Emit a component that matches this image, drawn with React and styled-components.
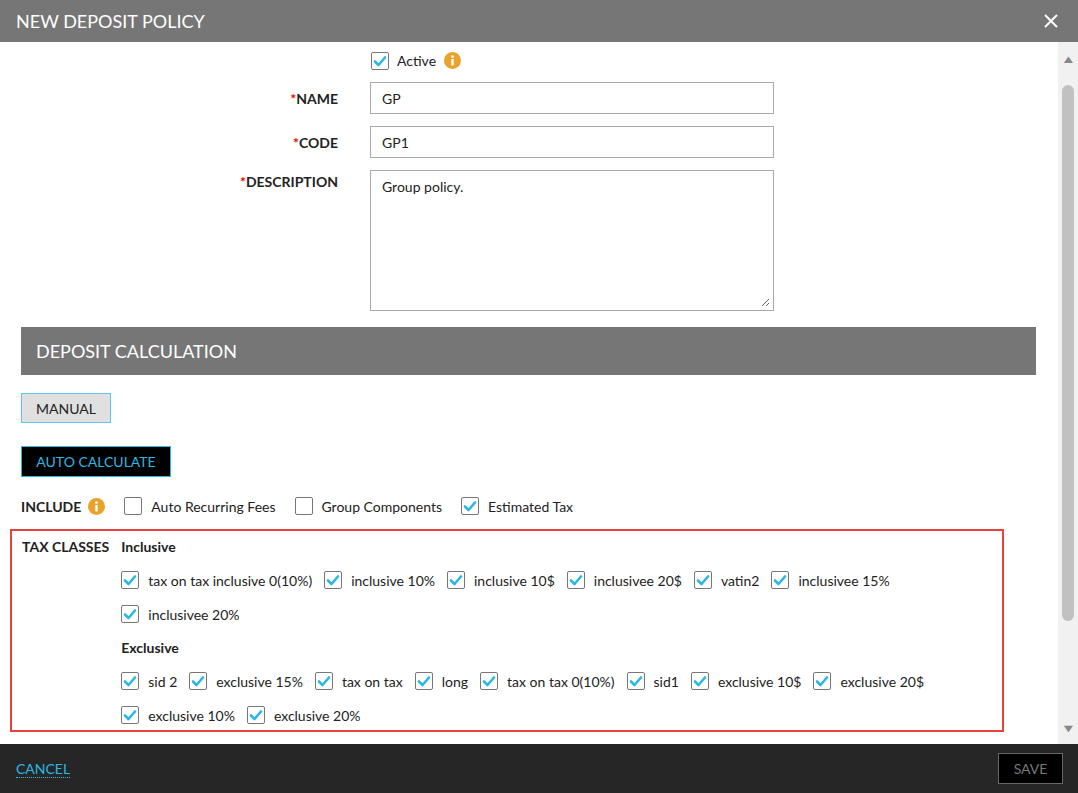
import React from 'react';
import styled, { createGlobalStyle } from 'styled-components';

const Global = createGlobalStyle`
  html, body { margin: 0; padding: 0; }
  body { font-family: Lato, "Open Sans", sans-serif; color: #222; background: #fff; }
  * { box-sizing: border-box; }
`;

const Check = ({ on }) => (
  <Box>
    {on && (
      <svg width="14" height="12" viewBox="0 0 14 12">
        <path d="M2 6.5 L5.5 10 L12 2.5" fill="none" stroke="#2bb7e4" strokeWidth="2.6" strokeLinecap="round" strokeLinejoin="round" />
      </svg>
    )}
  </Box>
);

const Info = () => (
  <svg width="17" height="17" viewBox="0 0 17 17">
    <circle cx="8.5" cy="8.5" r="8.5" fill="#eaa22b" />
    <circle cx="8.5" cy="4.6" r="1.4" fill="#fff" />
    <rect x="7.3" y="7" width="2.4" height="6.5" rx="0.6" fill="#fff" />
  </svg>
);

const inclusive = ['tax on tax inclusive 0(10%)', 'inclusive 10%', 'inclusive 10$', 'inclusivee 20$', 'vatin2', 'inclusivee 15%', 'inclusivee 20%'];
const exclusive = ['sid 2', 'exclusive 15%', 'tax on tax', 'long', 'tax on tax 0(10%)', 'sid1', 'exclusive 10$', 'exclusive 20$', 'exclusive 10%', 'exclusive 20%'];

export default function App() {
  return (
    <Page>
      <Global />
      <Header>
        <Title>NEW DEPOSIT POLICY</Title>
        <Close>
          <svg width="16" height="16" viewBox="0 0 16 16">
            <path d="M2 2 L14 14 M14 2 L2 14" stroke="#fff" strokeWidth="2" />
          </svg>
        </Close>
      </Header>
      <Middle>
        <Content>
          <Form>
            <span />
            <Inline><Check on /> Active <Info /></Inline>
            <Label><Req>*</Req>NAME</Label>
            <Input>GP</Input>
            <Label><Req>*</Req>CODE</Label>
            <Input>GP1</Input>
            <Label top><Req>*</Req>DESCRIPTION</Label>
            <Area>Group policy.
              <svg width="10" height="10" viewBox="0 0 10 10" style={{ position: 'absolute', right: 3, bottom: 3 }}>
                <path d="M9 2 L2 9 M9 6 L6 9" stroke="#666" strokeWidth="1" />
              </svg>
            </Area>
          </Form>
          <SectionBar>DEPOSIT CALCULATION</SectionBar>
          <ManualBtn>MANUAL</ManualBtn>
          <AutoBtn>AUTO CALCULATE</AutoBtn>
          <IncludeRow>
            <Bold>INCLUDE</Bold><Info />
            <Opt><Check /> Auto Recurring Fees</Opt>
            <Opt><Check /> Group Components</Opt>
            <Opt><Check on /> Estimated Tax</Opt>
          </IncludeRow>
          <TaxBox>
            <Bold>TAX CLASSES</Bold>
            <Groups>
              <GroupTitle>Inclusive</GroupTitle>
              <Items>{inclusive.map(t => <Opt key={t}><Check on /> {t}</Opt>)}</Items>
              <GroupTitle>Exclusive</GroupTitle>
              <Items>{exclusive.map((t, i) => <Opt key={i}><Check on /> {t}</Opt>)}</Items>
            </Groups>
          </TaxBox>
        </Content>
        <Scroll>
          <Arrow>▲</Arrow>
          <Thumb />
          <Arrow>▼</Arrow>
        </Scroll>
      </Middle>
      <Footer>
        <Cancel>CANCEL</Cancel>
        <Save>SAVE</Save>
      </Footer>
    </Page>
  );
}

const Page = styled.div`
  width: 1078px; height: 793px; display: flex; flex-direction: column; overflow: hidden;
`;
const Header = styled.div`
  height: 42px; background: #767676; display: flex; align-items: center; justify-content: space-between; padding: 0 19px 0 16px;
`;
const Title = styled.div` color: #fff; font-size: 18px; `;
const Close = styled.div` display: flex; `;
const Middle = styled.div` flex: 1; display: flex; min-height: 0; `;
const Content = styled.div` flex: 1; padding: 9px 22px 0 21px; overflow: hidden; `;
const Form = styled.div`
  display: grid; grid-template-columns: 317px 404px; column-gap: 32px; row-gap: 12px; align-items: center;
`;
const Inline = styled.div` display: flex; align-items: center; gap: 8px; font-size: 14px; height: 19px; padding-left: 1px; `;
const Label = styled.div`
  text-align: right; font-weight: bold; font-size: 14px; align-self: ${p => p.top ? 'start' : 'center'};
  padding-top: ${p => p.top ? '3px' : '0'};
`;
const Req = styled.span` color: #e00; `;
const Input = styled.div`
  height: 32px; border: 1px solid #a9a9a9; padding: 0 11px; display: flex; align-items: center; font-size: 14px;
`;
const Area = styled.div`
  height: 141px; border: 1px solid #a9a9a9; padding: 7px 11px; font-size: 14px; position: relative;
`;
const SectionBar = styled.div`
  margin-top: 16px; height: 48px; background: #767676; color: #fff; font-size: 18px; display: flex; align-items: center; padding-left: 15px;
`;
const ManualBtn = styled.div`
  margin-top: 18px; width: 90px; height: 30px; background: #e0e0e0; border: 1px solid #5bc8e8; font-size: 14px;
  display: flex; align-items: center; justify-content: center;
`;
const AutoBtn = styled.div`
  margin-top: 23px; width: 150px; height: 31px; background: #000; border: 1px solid #2bb7e4; color: #2bb7e4; font-size: 14px;
  display: flex; align-items: center; justify-content: center;
`;
const IncludeRow = styled.div` margin-top: 20px; display: flex; align-items: center; gap: 7px; font-size: 14px; `;
const Bold = styled.div` font-weight: bold; font-size: 14px; `;
const Opt = styled.div` display: flex; align-items: center; gap: 9px; font-size: 14px; margin-left: 12px; `;
const Box = styled.span`
  width: 18px; height: 18px; border: 1px solid #777; border-radius: 2px; background: #fff;
  display: inline-flex; align-items: center; justify-content: center; flex-shrink: 0;
`;
const TaxBox = styled.div`
  margin: 14px 32px 0 -11px; border: 2px solid #e8413e; height: 203px; padding: 7px 10px; display: flex; gap: 12px;
`;
const Groups = styled.div` display: flex; flex-direction: column; `;
const GroupTitle = styled.div` font-weight: bold; font-size: 14px; margin: 0 0 0 0; height: 17px; `;
const Items = styled.div`
  display: flex; flex-wrap: wrap; row-gap: 16px; margin: 16px 0 16px -12px; width: 860px;
`;
const Scroll = styled.div` width: 20px; background: #f1f1f1; display: flex; flex-direction: column; align-items: center; padding: 10px 0; `;
const Arrow = styled.div` font-size: 11px; color: #888; transform: scaleX(1.4); `;
const Thumb = styled.div` width: 12px; flex: 1; margin: 20px 0 100px; background: #c1c1c1; border-radius: 6px; `;
const Footer = styled.div`
  height: 49px; background: #262626; display: flex; align-items: center; justify-content: space-between; padding: 0 15px 0 16px;
`;
const Cancel = styled.div` color: #2bb7e4; font-size: 14px; border-bottom: 1px dotted #2bb7e4; `;
const Save = styled.div`
  width: 65px; height: 31px; background: #000; border: 1px solid #666; color: #777; font-size: 14px;
  display: flex; align-items: center; justify-content: center;
`;
